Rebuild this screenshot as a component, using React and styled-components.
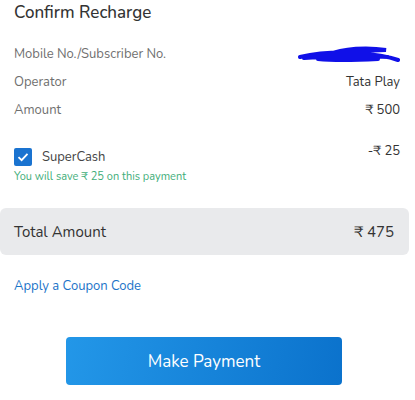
import React from "react";
import styled, { createGlobalStyle } from "styled-components";

const GlobalStyle = createGlobalStyle`
  body {
    margin: 0;
    background: #fff;
    font-family: "Nunito", Lato, "Open Sans", sans-serif;
  }
`;

const Page = styled.div`
  width: 415px;
  height: 400px;
  display: flex;
  flex-direction: column;
  overflow: hidden;
`;

const Title = styled.h2`
  margin: 0;
  padding: 2px 14px 0;
  font-size: 17px;
  font-weight: 500;
  color: #333;
  line-height: 22px;
`;

const Details = styled.div`
  display: flex;
  flex-direction: column;
  padding: 16px 15px 0 14px;
`;

const Row = styled.div`
  display: flex;
  justify-content: space-between;
  align-items: center;
  height: 28px;
  font-size: 13px;
`;

const Label = styled.span`
  color: #6f6f6f;
`;

const Value = styled.span`
  color: #333;
  font-size: 13px;
  margin-top: ${(p) => (p.$raised ? "-6px" : "0")};
`;

const Cash = styled.div`
  display: flex;
  justify-content: space-between;
  align-items: flex-start;
  margin-top: 24px;
`;

const CheckRow = styled.label`
  display: flex;
  align-items: center;
  gap: 10px;
  font-size: 13px;
  color: #444;
`;

const Box = styled.span`
  width: 18px;
  height: 18px;
  border-radius: 2px;
  background: #1a73d0;
  display: flex;
  align-items: center;
  justify-content: center;
`;

const Save = styled.div`
  margin-top: 3px;
  font-size: 11px;
  color: #3fae7a;
`;

const Total = styled.div`
  margin-top: 24px;
  width: 409px;
  height: 47px;
  box-sizing: border-box;
  padding: 0 15px 0 14px;
  border-radius: 6px;
  background: #e9eaec;
  display: flex;
  justify-content: space-between;
  align-items: center;
  font-size: 15px;
  color: #333;
`;

const Coupon = styled.a`
  margin: 22px 0 0 14px;
  font-size: 13px;
  color: #1a73c8;
  text-decoration: none;
`;

const PayButton = styled.button`
  align-self: flex-start;
  margin: 42px 0 0 66px;
  width: 276px;
  height: 48px;
  border: none;
  border-radius: 4px;
  background: linear-gradient(100deg, #2397e8, #0b72cc);
  color: #fff;
  font-family: inherit;
  font-size: 17px;
`;

const Scribble = () => (
  <svg width="102" height="20" viewBox="0 0 102 20">
    <path
      d="M2 13 C20 9 40 8 58 9 C72 10 86 11 100 16 M6 14 C30 12 60 11 90 13 M30 11 C45 4 70 3 88 6 C70 6 50 9 40 12 M20 15 C40 17 60 16 80 15"
      stroke="#1010e8"
      strokeWidth="4"
      fill="none"
      strokeLinecap="round"
    />
  </svg>
);

export default function App() {
  return (
    <Page>
      <GlobalStyle />
      <Title>Confirm Recharge</Title>
      <Details>
        <Row>
          <Label>Mobile No./Subscriber No.</Label>
          <Scribble />
        </Row>
        <Row>
          <Label>Operator</Label>
          <Value>Tata Play</Value>
        </Row>
        <Row>
          <Label>Amount</Label>
          <Value>₹ 500</Value>
        </Row>
        <Cash>
          <CheckRow>
            <Box>
              <svg width="14" height="14" viewBox="0 0 14 14">
                <path d="M2.5 7.2 L5.6 10.2 L11.5 3.8" stroke="#fff" strokeWidth="1.8" fill="none" />
              </svg>
            </Box>
            SuperCash
          </CheckRow>
          <Value $raised>-₹ 25</Value>
        </Cash>
        <Save>You will save ₹ 25 on this payment</Save>
      </Details>
      <Total>
        <span>Total Amount</span>
        <span>₹ 475</span>
      </Total>
      <Coupon>Apply a Coupon Code</Coupon>
      <PayButton>Make Payment</PayButton>
    </Page>
  );
}
